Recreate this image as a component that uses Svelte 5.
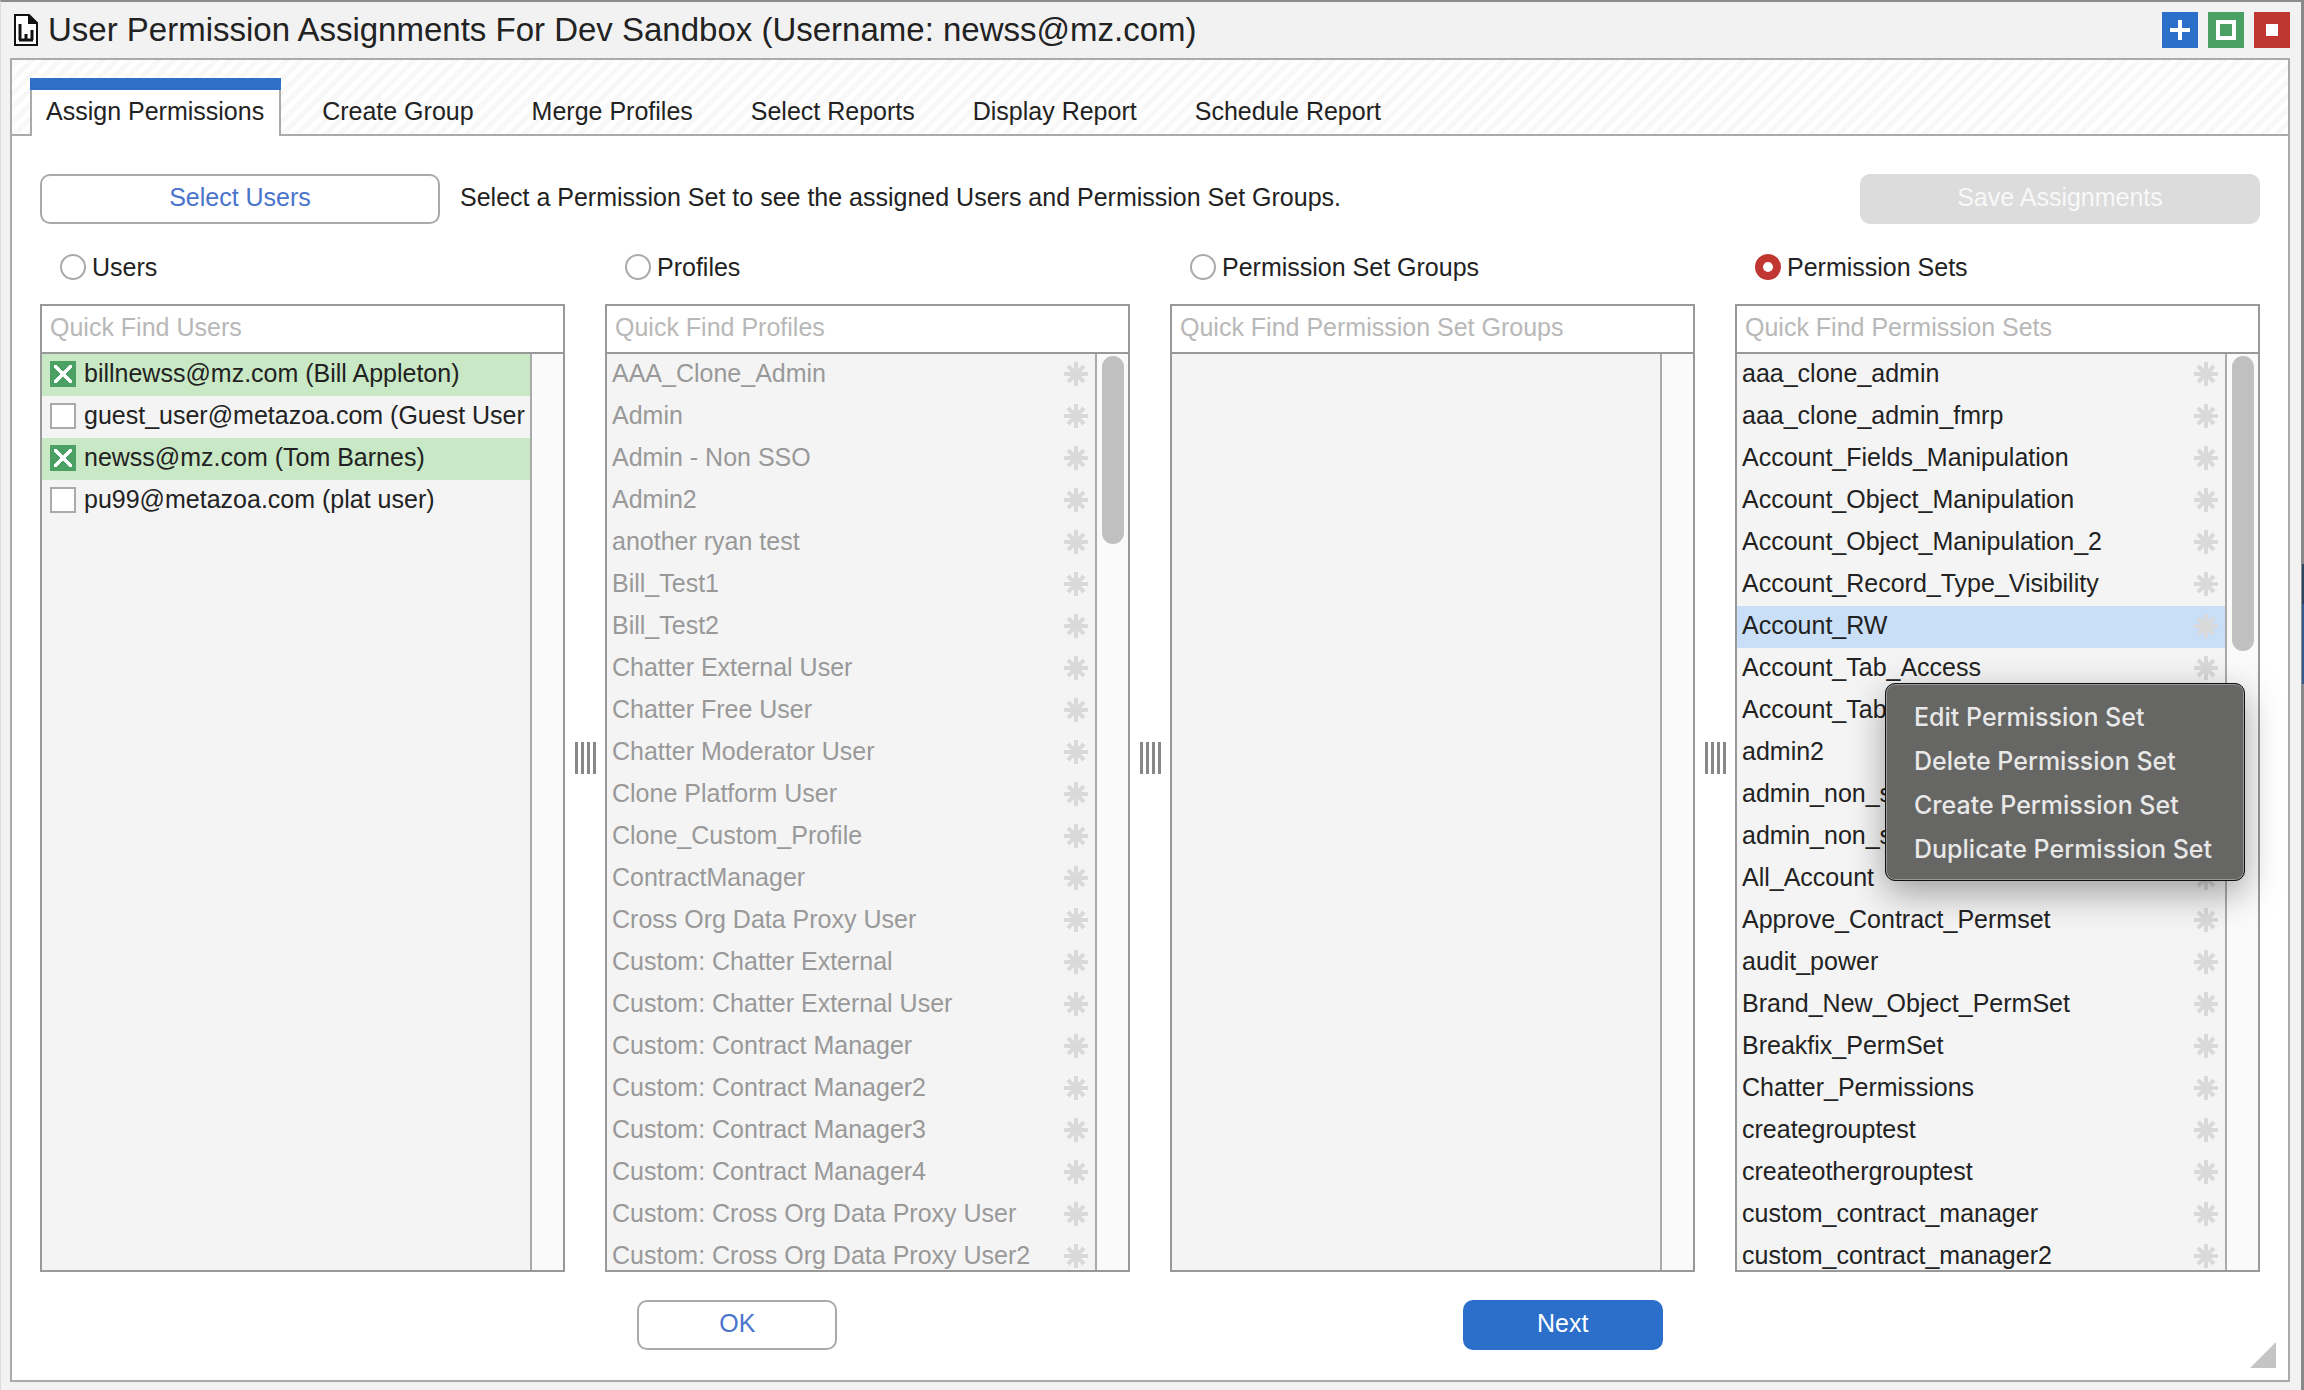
<script>
  /**
   * DATA
   */

  const title =
    "User Permission Assignments For Dev Sandbox (Username: newss@mz.com)";

  const tabs = [
    "Assign Permissions",
    "Create Group",
    "Merge Profiles",
    "Select Reports",
    "Display Report",
    "Schedule Report",
  ];

  const menuItems = [
    "Edit Permission Set",
    "Delete Permission Set",
    "Create Permission Set",
    "Duplicate Permission Set",
  ];

  const users = [
    { name: "billnewss@mz.com (Bill Appleton)", checked: true },
    { name: "guest_user@metazoa.com (Guest User", checked: false },
    { name: "newss@mz.com (Tom Barnes)", checked: true },
    { name: "pu99@metazoa.com (plat user)", checked: false },
  ];

  const profiles = [
    "AAA_Clone_Admin",
    "Admin",
    "Admin - Non SSO",
    "Admin2",
    "another ryan test",
    "Bill_Test1",
    "Bill_Test2",
    "Chatter External User",
    "Chatter Free User",
    "Chatter Moderator User",
    "Clone Platform User",
    "Clone_Custom_Profile",
    "ContractManager",
    "Cross Org Data Proxy User",
    "Custom: Chatter External",
    "Custom: Chatter External User",
    "Custom: Contract Manager",
    "Custom: Contract Manager2",
    "Custom: Contract Manager3",
    "Custom: Contract Manager4",
    "Custom: Cross Org Data Proxy User",
    "Custom: Cross Org Data Proxy User2",
  ];

  const permissionSets = [
    "aaa_clone_admin",
    "aaa_clone_admin_fmrp",
    "Account_Fields_Manipulation",
    "Account_Object_Manipulation",
    "Account_Object_Manipulation_2",
    "Account_Record_Type_Visibility",
    "Account_RW",
    "Account_Tab_Access",
    "Account_Tab",
    "admin2",
    "admin_non_s",
    "admin_non_s",
    "All_Account",
    "Approve_Contract_Permset",
    "audit_power",
    "Brand_New_Object_PermSet",
    "Breakfix_PermSet",
    "Chatter_Permissions",
    "creategrouptest",
    "createothergrouptest",
    "custom_contract_manager",
    "custom_contract_manager2",
  ];

  // thumb is the scroll thumb's share of the track, in percent
  const columns = [
    { label: "Users", users: true, items: [], thumb: 0 },
    { label: "Profiles", muted: true, items: profiles, thumb: 20.6 },
    { label: "Permission Set Groups", items: [], thumb: 0 },
    { label: "Permission Sets", items: permissionSets, thumb: 32.4 },
  ];

  /**
   * STATE
   */

  let activeTab = $state(tabs[0]);
  let mode = $state("Permission Sets");
  let selected = $state("Account_RW");
  let menuOpen = $state(true);
  let userList = $state(users);
</script>

{#snippet star()}
  <svg class="star" viewBox="0 0 24 24" aria-hidden="true">
    <path d="M12 0v24M0 12h24M4 4l16 16M20 4L4 20" />
  </svg>
{/snippet}

<div class="window">
  <header>
    <svg class="doc" viewBox="0 0 24 32" aria-hidden="true">
      <path d="M1 1h14l8 8v22H1z" fill="#fff" stroke="#111" stroke-width="2" />
      <path d="M14 0l10 10H14z" fill="#111" />
      <path
        d="M6 10v16M12 20v6M18 16v10M5 26h14"
        fill="none"
        stroke="#111"
        stroke-width="3"
      />
    </svg>
    <h1>{title}</h1>
    <button class="ctl blue" aria-label="Add">
      <svg viewBox="0 0 36 36"><path d="M18 8v20M8 18h20" /></svg>
    </button>
    <button class="ctl green" aria-label="Maximize">
      <svg viewBox="0 0 36 36"><path d="M10 10h16v16H10z" /></svg>
    </button>
    <button class="ctl red" aria-label="Close">
      <svg viewBox="0 0 36 36"><rect x="12" y="12" width="12" height="12" fill="#fff" /></svg>
    </button>
  </header>

  <main>
    <nav>
      {#each tabs as tab}
        <button
          class="tab"
          class:active={tab === activeTab}
          onclick={() => (activeTab = tab)}>{tab}</button
        >
      {/each}
    </nav>

    <div class="toolbar">
      <button class="btn wide">Select Users</button>
      <p>Select a Permission Set to see the assigned Users and Permission Set Groups.</p>
      <button class="btn wide disabled" disabled>Save Assignments</button>
    </div>

    <div class="columns">
      {#each columns as col, c}
        {#if c > 0}
          <div class="grip"><i></i><i></i><i></i><i></i></div>
        {/if}
        <section>
          <label class="mode">
            <input type="radio" name="mode" value={col.label} bind:group={mode} />
            {col.label}
          </label>
          <div class="box">
            <input
              class="find"
              type="text"
              placeholder="Quick Find {col.label}"
              aria-label="Quick Find {col.label}"
            />
            <div class="body">
              <ul class:muted={col.muted}>
                {#if col.users}
                  {#each userList as user}
                    <li class:checked={user.checked}>
                      <label>
                        <input type="checkbox" bind:checked={user.checked} />
                        {user.name}
                      </label>
                    </li>
                  {/each}
                {/if}
                {#each col.items as item}
                  <li class:selected={item === selected}>
                    <button class="item" onclick={() => (selected = item)}>{item}</button>
                    {@render star()}
                  </li>
                {/each}
              </ul>
              <div class="track">
                {#if col.thumb}
                  <div class="thumb" style="height:{col.thumb}%"></div>
                {/if}
              </div>
            </div>
            {#if menuOpen && col.label === "Permission Sets"}
              <div class="menu" role="menu">
                {#each menuItems as item}
                  <button role="menuitem" onclick={() => (menuOpen = false)}>{item}</button>
                {/each}
              </div>
            {/if}
          </div>
        </section>
      {/each}
    </div>

    <footer>
      <button class="btn">OK</button>
      <button class="btn primary">Next</button>
    </footer>
    <svg class="resize" viewBox="0 0 26 26" aria-hidden="true">
      <path d="M26 0v26H0z" fill="#c4c4c4" />
    </svg>
  </main>
</div>

<style>
  :global(body) {
    background: #f2f2f2;
  }
  .window,
  .window button,
  .window input {
    font-family: "Liberation Sans", Arial, sans-serif;
    font-size: 25px;
    color: #222;
  }
  .window {
    position: relative;
    display: flex;
    flex-direction: column;
    box-sizing: border-box;
    height: 100vh;
    min-height: 700px;
    padding: 0 11px 8px 9px;
    border-top: 2px solid #8c8c8c;
    border-right: 3px solid #8a8a8a;
    border-left: 1px solid #ddd;
    background: #f2f2f2;
  }
  /* sliver of the window behind this one */
  .window::after {
    content: "";
    position: absolute;
    top: 562px;
    right: -3px;
    width: 2px;
    height: 120px;
    background: linear-gradient(#2c4560 33%, #355a92 33%);
  }
  button {
    margin: 0;
    padding: 0;
    border: none;
    background: none;
    cursor: pointer;
  }

  header {
    display: flex;
    align-items: center;
    gap: 10px;
    height: 56px;
    flex: none;
  }
  .doc {
    width: 24px;
    height: 32px;
    margin-left: 4px;
  }
  h1 {
    flex: 1;
    margin: 0;
    font-size: 33px;
    font-weight: normal;
    line-height: 56px;
    white-space: nowrap;
  }
  .ctl,
  .ctl svg {
    display: block;
    width: 36px;
    height: 36px;
  }
  .ctl path {
    fill: none;
    stroke: #fff;
    stroke-width: 4;
  }
  .blue {
    background: #2b6fcb;
  }
  .green {
    background: #4ba064;
  }
  .red {
    background: #c03630;
  }

  main {
    position: relative;
    display: flex;
    flex-direction: column;
    flex: 1;
    min-height: 0;
    border: 2px solid #aaa;
    background: #fff;
  }
  nav {
    display: flex;
    align-items: flex-end;
    gap: 25px;
    height: 74px;
    flex: none;
    padding-left: 18px;
    border-bottom: 2px solid #aaa;
    background: repeating-linear-gradient(
      -45deg,
      #fff 0,
      #fff 5px,
      #f8f8f8 5px,
      #f8f8f8 10px
    );
  }
  .tab {
    height: 58px;
    margin-bottom: -2px;
    padding: 0 15px 4px 14px;
    border: 2px solid transparent;
    border-top: 12px solid transparent;
    border-bottom: none;
    white-space: nowrap;
  }
  .tab.active {
    position: relative;
    border-color: #aaa;
    background: #fff;
  }
  .tab.active::before {
    content: "";
    position: absolute;
    top: -12px;
    left: -2px;
    right: -2px;
    height: 12px;
    background: #2f6fc8;
  }

  .toolbar {
    display: flex;
    align-items: center;
    gap: 20px;
    padding: 38px 28px 20px;
  }
  .toolbar p {
    flex: 1;
    margin: 0;
    padding-bottom: 4px;
    white-space: nowrap;
  }
  .window .btn {
    box-sizing: border-box;
    width: 200px;
    height: 50px;
    padding-bottom: 4px;
    border: 2px solid #aaa;
    border-radius: 10px;
    background: #fff;
    color: #4a74cc;
  }
  .window .btn.wide {
    width: 400px;
  }
  .window .btn.disabled {
    border-color: #dcdcdc;
    background: #dcdcdc;
    color: #f8f8f8;
  }
  .window .btn.primary {
    border-color: #2b6fcb;
    background: #2b6fcb;
    color: #fff;
  }

  .columns {
    display: grid;
    grid-template-columns: 1fr 40px 1fr 40px 1fr 40px 1fr;
    grid-template-rows: minmax(0, 1fr);
    flex: 1;
    min-height: 0;
    padding: 0 28px;
  }
  .grip {
    display: flex;
    align-self: center;
    justify-content: center;
    gap: 3px;
  }
  .grip i {
    width: 3px;
    height: 32px;
    background: #888;
  }
  section {
    display: flex;
    flex-direction: column;
    min-width: 0;
  }
  .mode {
    display: flex;
    align-items: center;
    gap: 6px;
    padding: 0 20px;
    height: 46px;
    margin-bottom: 14px;
  }
  input[type="radio"],
  input[type="checkbox"] {
    flex: none;
    box-sizing: border-box;
    width: 26px;
    height: 26px;
    margin: 0;
    appearance: none;
    border: 2px solid #aaa;
    background: #fff;
  }
  input[type="radio"] {
    border-radius: 50%;
  }
  input[type="radio"]:checked {
    border: 8px solid #c03630;
  }
  input[type="checkbox"]:checked {
    border-color: #4ba064;
    background:
      linear-gradient(45deg, transparent 42%, #fff 43%, #fff 57%, transparent 58%)
        center / 18px 18px no-repeat,
      linear-gradient(-45deg, transparent 42%, #fff 43%, #fff 57%, transparent 58%)
        center / 18px 18px no-repeat,
      #4ba064;
  }
  .box {
    position: relative;
    display: flex;
    flex-direction: column;
    flex: 1;
    min-height: 0;
    border: 2px solid #999;
  }
  .find {
    box-sizing: border-box;
    width: 100%;
    height: 48px;
    flex: none;
    padding: 0 8px 4px;
    border: none;
    border-bottom: 2px solid #999;
    background: #fff;
  }
  .find::placeholder {
    color: #b8b8b8;
    opacity: 1;
  }
  .body {
    display: flex;
    flex: 1;
    min-height: 0;
  }
  ul {
    flex: 1;
    min-width: 0;
    margin: 0;
    padding: 0;
    overflow: hidden;
    background: #f4f4f4;
    list-style: none;
  }
  li {
    display: flex;
    align-items: center;
    justify-content: space-between;
    box-sizing: border-box;
    height: 42px;
    padding: 0 7px 3px 5px;
    white-space: nowrap;
  }
  li label {
    display: flex;
    align-items: center;
    gap: 8px;
    padding-left: 3px;
  }
  li.checked {
    background: #c9e8c5;
  }
  li.selected {
    background: #c9def7;
  }
  .window .muted .item {
    color: #999;
  }
  .star {
    flex: none;
    width: 24px;
    height: 24px;
  }
  .star path {
    fill: none;
    stroke: #d9d9d9;
    stroke-width: 4;
  }
  .track {
    width: 33px;
    flex: none;
    box-sizing: border-box;
    padding: 2px 4px 2px 5px;
    border-left: 2px solid #aaa;
    background: #fafafa;
  }
  .thumb {
    width: 22px;
    border-radius: 11px;
    background: #c0c0c0;
  }

  .menu {
    position: absolute;
    top: 377px;
    right: 13px;
    box-sizing: border-box;
    width: 360px;
    padding: 11px 0 9px;
    border: 1px solid #111;
    border-radius: 10px;
    background: #666664;
    box-shadow:
      inset 0 0 0 1px #999,
      0 12px 36px rgba(0, 0, 0, 0.35);
  }
  .window .menu button {
    display: block;
    width: 100%;
    height: 44px;
    padding: 0 28px;
    font-family: Inter, sans-serif;
    font-size: 25px;
    font-weight: 500;
    color: #e8e8e8;
    text-align: left;
    white-space: nowrap;
  }

  footer {
    display: flex;
    justify-content: space-evenly;
    padding: 28px 0 30px;
  }
  .resize {
    position: absolute;
    right: 12px;
    bottom: 12px;
    width: 26px;
    height: 26px;
  }
</style>
